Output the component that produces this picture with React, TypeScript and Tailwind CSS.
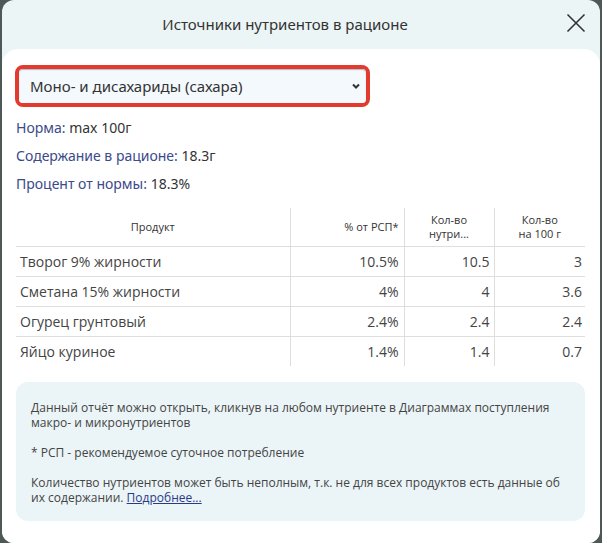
import React from 'react';

const rows = [
    { name: 'Творог 9% жирности', pct: '10.5%', amount: '10.5', per100: '3' },
    { name: 'Сметана 15% жирности', pct: '4%', amount: '4', per100: '3.6' },
    { name: 'Огурец грунтовый', pct: '2.4%', amount: '2.4', per100: '2.4' },
    { name: 'Яйцо куриное', pct: '1.4%', amount: '1.4', per100: '0.7' },
];

const stats = [
    { label: 'Норма:', value: 'max 100г' },
    { label: 'Содержание в рационе:', value: '18.3г' },
    { label: 'Процент от нормы:', value: '18.3%' },
];

const App: React.FC = () => {
    return (
        <div className="w-[602px] h-[543px] bg-[#4d5857] overflow-hidden flex">
            <div className="ml-[2px] w-[598px] h-[543px] rounded-[12px] bg-[#ecf5f6] flex flex-col overflow-hidden font-['Noto_Sans',sans-serif]">
                {/* header */}
                <div className="relative h-[49px] shrink-0 flex items-center justify-center pr-[32px]">
                    <h2 className="text-[15px] text-[#333] leading-none">Источники нутриентов в рационе</h2>
                    <button className="absolute right-[14px] top-[13px] w-[20px] h-[20px] flex items-center justify-center">
                        <svg width="20" height="20" viewBox="0 0 20 20" fill="none" stroke="#333" strokeWidth="1.6">
                            <path d="M1.5 1.5 L18.5 18.5 M18.5 1.5 L1.5 18.5" />
                        </svg>
                    </button>
                </div>

                {/* body */}
                <div className="flex-1 bg-white rounded-t-[16px] pl-[13px] pr-[13px] pt-[16px]">
                    <div className="w-[355px] h-[42px] border-4 border-[#e23b2e] rounded-[8px]">
                        <div className="h-full bg-[#f3f9fd] rounded-[4px] shadow-[inset_0_1px_1px_rgba(90,110,140,0.45)] flex items-center justify-between pl-[11px] pr-[5px]">
                            <span className="text-[15px] text-[#333]">Моно- и дисахариды (сахара)</span>
                            <svg width="10" height="10" viewBox="0 0 10 10" fill="none" stroke="#333" strokeWidth="2">
                                <path d="M2 3.5 L5 6.5 L8 3.5" />
                            </svg>
                        </div>
                    </div>

                    <div className="ml-px mt-[11px] flex flex-col gap-[8px]">
                        {stats.map((s) => (
                            <div key={s.label} className="h-[20px] leading-[20px] text-[14px] text-[#333]">
                                <span className="text-[#3b4a8b]">{s.label}</span> {s.value}
                            </div>
                        ))}
                    </div>

                    <table className="ml-px mt-[14px] w-[569px] border-collapse table-fixed font-['Open_Sans',sans-serif] text-[#444]">
                        <colgroup>
                            <col className="w-[274px]" />
                            <col className="w-[114px]" />
                            <col className="w-[90px]" />
                            <col className="w-[91px]" />
                        </colgroup>
                        <thead>
                            <tr className="h-[38px] border-b border-[#dedede] text-[11px] leading-[14px] text-[#333]">
                                <th className="font-normal text-center">Продукт</th>
                                <th className="font-normal text-right pr-[5px] border-l border-[#dedede]">% от РСП*</th>
                                <th className="font-normal text-center border-l border-[#dedede]">Кол-во<br />нутри...</th>
                                <th className="font-normal text-center border-l border-[#dedede]">Кол-во<br />на 100 г</th>
                            </tr>
                        </thead>
                        <tbody className="text-[14px]">
                            {rows.map((r, i) => (
                                <tr key={r.name} className={`h-[30px] ${i < rows.length - 1 ? 'border-b border-[#dedede]' : ''}`}>
                                    <td className="pl-[4px]">{r.name}</td>
                                    <td className="text-right pr-[5px] border-l border-[#dedede]">{r.pct}</td>
                                    <td className="text-right pr-[4px] border-l border-[#dedede]">{r.amount}</td>
                                    <td className="text-right pr-[3px] border-l border-[#dedede]">{r.per100}</td>
                                </tr>
                            ))}
                        </tbody>
                    </table>

                    <div className="ml-px mt-[16px] w-[569px] rounded-[12px] bg-[#ebf5f7] px-[15px] pt-[18px] pb-[16px] font-['Open_Sans',sans-serif] text-[12px] leading-[15px] text-[#444]">
                        <p>Данный отчёт можно открыть, кликнув на любом нутриенте в Диаграммах поступления макро- и микронутриентов</p>
                        <br />
                        <p>* РСП - рекомендуемое суточное потребление</p>
                        <br />
                        <p>
                            Количество нутриентов может быть неполным, т.к. не для всех продуктов есть данные об их содержании.{' '}
                            <a className="text-[#2b3a87] underline">Подробнее...</a>
                        </p>
                    </div>
                </div>
            </div>
        </div>
    );
};

export default App;
